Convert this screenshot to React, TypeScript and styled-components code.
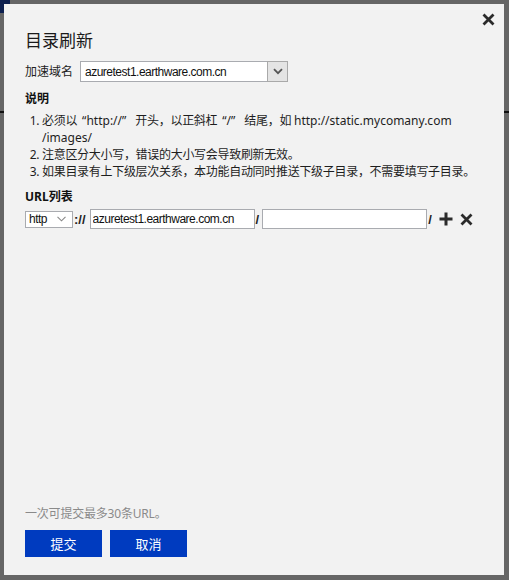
import React from 'react';
import styled, { createGlobalStyle } from 'styled-components';

const Global = createGlobalStyle`
  html, body { margin: 0; padding: 0; }
  body {
    background: #666;
    font-family: "Noto Sans", "Noto Sans CJK SC", sans-serif;
    color: #1e1e1e;
  }
`;

const Backdrop = styled.div`
  width: 509px;
  height: 580px;
  box-sizing: border-box;
  padding: 4px 5px 5px 4px;
  background-color: #666;
  background-image: linear-gradient(#0d1f4f, #0d1f4f), linear-gradient(#111, #111);
  background-size: 10px 13px, 100% 2px;
  background-position: 0 0, 0 111px;
  background-repeat: no-repeat;
`;

const Dialog = styled.div`
  width: 100%;
  height: 100%;
  box-sizing: border-box;
  background: #f2f2f2;
  display: flex;
  flex-direction: column;
  padding: 0 21px 18px 21px;
`;

const TopBar = styled.div`
  display: flex;
  justify-content: flex-end;
  padding-top: 9px;
  margin-right: -12px;
`;

const CloseButton = styled.button`
  width: 13px;
  height: 13px;
  padding: 0;
  border: 0;
  background: none;
  display: block;
  cursor: pointer;
`;

const Title = styled.h1`
  margin: 3px 0 0;
  font-size: 17px;
  line-height: 24px;
  font-weight: normal;
  color: #1a1a1a;
`;

const DomainRow = styled.div`
  display: flex;
  align-items: center;
  gap: 7px;
  margin-top: 8px;
  height: 21px;
`;

const Label = styled.span`
  font-size: 12px;
  line-height: 17px;
  color: #222;
`;

const SelectBox = styled.div<{ $w: number; $h: number }>`
  width: ${p => p.$w}px;
  height: ${p => p.$h}px;
  box-sizing: border-box;
  border: 1px solid #a9abb0;
  background: #fff;
  display: flex;
  align-items: stretch;
`;

const SelectValue = styled.span<{ $pad: number }>`
  flex: 1;
  display: flex;
  align-items: center;
  padding-left: ${p => p.$pad}px;
  font-family: "Liberation Sans", Arial, sans-serif;
  font-size: 12px;
  letter-spacing: -0.5px;
  color: #111;
`;

const DropButton = styled.span`
  width: 21px;
  box-sizing: border-box;
  border: 1px solid #a9a9a9;
  margin: -1px -1px -1px 0;
  background: #e4e4e4;
  display: flex;
  align-items: center;
  justify-content: center;
`;

const PlainChevron = styled.span`
  width: 16px;
  display: flex;
  align-items: center;
  justify-content: center;
  margin-right: 3px;
`;

const Heading = styled.h2<{ $mt: number }>`
  margin: ${p => p.$mt}px 0 0;
  font-size: 12px;
  line-height: 17px;
  font-weight: bold;
  color: #111;
`;

const Notes = styled.ol`
  margin: 5px 0 0;
  padding-left: 17px;
`;

const Note = styled.li`
  font-size: 12px;
  line-height: 17px;
  color: #1e1e1e;
  letter-spacing: -0.3px;
`;

const Latin = styled.span`
  letter-spacing: 0;
`;

const Quote = styled.span<{ $l: number; $r: number }>`
  letter-spacing: 0;
  margin: 0 ${p => p.$r}px 0 ${p => p.$l}px;
`;

const UrlRow = styled.div`
  display: flex;
  align-items: center;
  margin-top: 4px;
  height: 20px;
`;

const Sep = styled.span<{ $ml: number; $mr: number }>`
  font-family: "Liberation Sans", Arial, sans-serif;
  font-weight: bold;
  font-size: 13px;
  color: #222;
  margin: 0 ${p => p.$mr}px 0 ${p => p.$ml}px;
`;

const TextInput = styled.input`
  width: 165px;
  height: 20px;
  box-sizing: border-box;
  border: 1px solid #a9abb0;
  background: #fff;
  padding: 0 2px;
  margin: 0;
  font-family: "Liberation Sans", Arial, sans-serif;
  font-size: 12px;
  letter-spacing: -0.5px;
  color: #111;
  outline: none;
`;

const IconButton = styled.button<{ $ml: number }>`
  padding: 0;
  border: 0;
  background: none;
  display: flex;
  margin-left: ${p => p.$ml}px;
  cursor: pointer;
`;

const Footer = styled.div`
  margin-top: auto;
  display: flex;
  flex-direction: column;
`;

const Hint = styled.p`
  margin: 0;
  font-size: 12px;
  line-height: 17px;
  color: #8a8a8a;
  letter-spacing: -0.2px;
`;

const Buttons = styled.div`
  display: flex;
  gap: 8px;
  margin-top: 8px;
`;

const PrimaryButton = styled.button`
  width: 77px;
  height: 27px;
  border: 0;
  padding: 0;
  background: #003bbf;
  color: #fff;
  font-family: "Noto Sans CJK SC", sans-serif;
  font-size: 13px;
  cursor: pointer;
`;

const Cross = ({ size, stroke }: { size: number; stroke: number }) => (
  <svg width={size} height={size} viewBox="0 0 13 13">
    <path d="M1.5 1.5 L11.5 11.5 M11.5 1.5 L1.5 11.5" stroke="#2b2b2b" strokeWidth={stroke} strokeLinecap="butt" fill="none" />
  </svg>
);

export default function App() {
  return (
    <>
      <Global />
      <Backdrop>
        <Dialog>
          <TopBar>
            <CloseButton aria-label="close">
              <Cross size={13} stroke={2.8} />
            </CloseButton>
          </TopBar>
          <Title>目录刷新</Title>
          <DomainRow>
            <Label>加速域名</Label>
            <SelectBox $w={208} $h={21}>
              <SelectValue $pad={4}>azuretest1.earthware.com.cn</SelectValue>
              <DropButton>
                <svg width="10" height="7" viewBox="0 0 10 7">
                  <path d="M1 1.2 L5 5.2 L9 1.2" stroke="#555" strokeWidth="1.8" fill="none" />
                </svg>
              </DropButton>
            </SelectBox>
          </DomainRow>
          <Heading $mt={8}>说明</Heading>
          <Notes>
            <Note>
              必须以<Quote $l={5} $r={0}>“</Quote><Latin>http://</Latin><Quote $l={0} $r={9}>”</Quote>开头，以正斜杠<Quote $l={5} $r={0}>“</Quote><Latin>/</Latin><Quote $l={0} $r={9}>”</Quote>结尾，如 <Latin>http://static.mycomany.com</Latin>
              <br />
              <Latin>/images/</Latin>
            </Note>
            <Note>注意区分大小写，错误的大小写会导致刷新无效。</Note>
            <Note>如果目录有上下级层次关系，本功能自动同时推送下级子目录，不需要填写子目录。</Note>
          </Notes>
          <Heading $mt={8}>URL列表</Heading>
          <UrlRow>
            <SelectBox $w={48} $h={17}>
              <SelectValue $pad={3}>http</SelectValue>
              <PlainChevron>
                <svg width="9" height="6" viewBox="0 0 9 6">
                  <path d="M0.5 0.8 L4.5 4.8 L8.5 0.8" stroke="#888" strokeWidth="1.1" fill="none" />
                </svg>
              </PlainChevron>
            </SelectBox>
            <Sep $ml={1} $mr={4}>://</Sep>
            <TextInput defaultValue="azuretest1.earthware.com.cn" />
            <Sep $ml={1} $mr={3}>/</Sep>
            <TextInput defaultValue="" />
            <Sep $ml={1} $mr={0}>/</Sep>
            <IconButton $ml={7} aria-label="add">
              <svg width="14" height="14" viewBox="0 0 14 14">
                <path d="M7 0.5 V13.5 M0.5 7 H13.5" stroke="#2b2b2b" strokeWidth="3" fill="none" />
              </svg>
            </IconButton>
            <IconButton $ml={7} aria-label="remove">
              <Cross size={13} stroke={2.8} />
            </IconButton>
          </UrlRow>
          <Footer>
            <Hint>一次可提交最多30条URL。</Hint>
            <Buttons>
              <PrimaryButton>提交</PrimaryButton>
              <PrimaryButton>取消</PrimaryButton>
            </Buttons>
          </Footer>
        </Dialog>
      </Backdrop>
    </>
  );
}
